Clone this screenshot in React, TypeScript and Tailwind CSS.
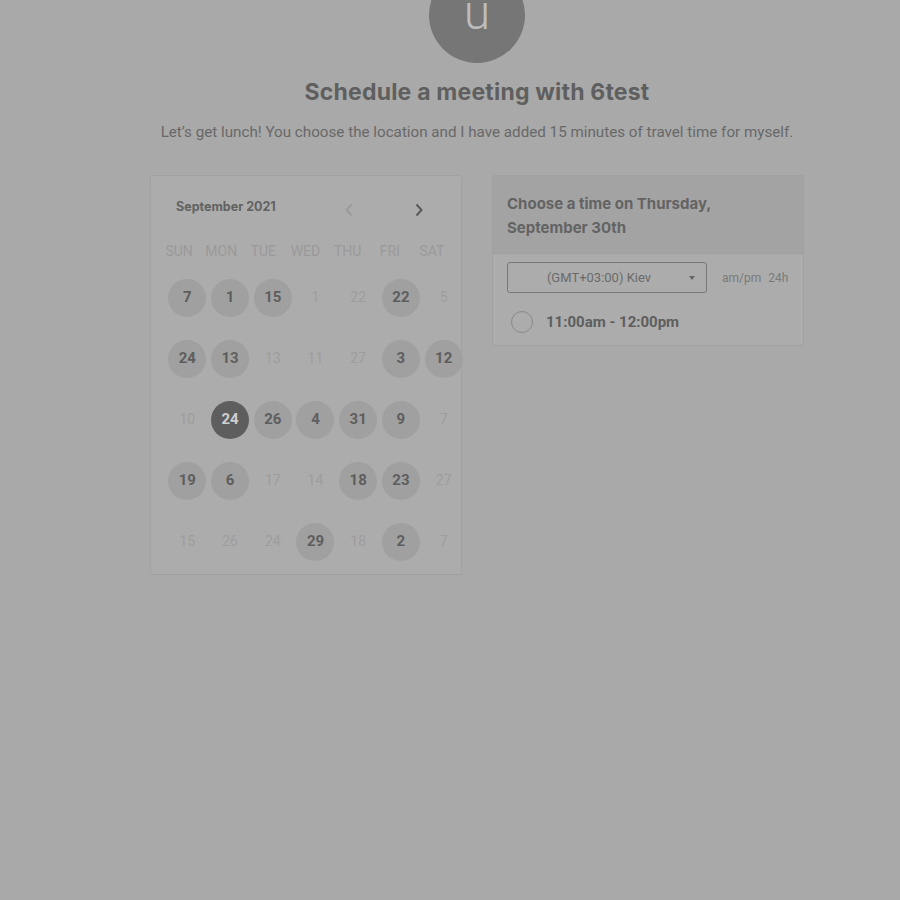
import React from 'react';

type Day = { n: number; on?: boolean; sel?: boolean };

const weeks: Day[][] = [
	[{ n: 7, on: true }, { n: 1, on: true }, { n: 15, on: true }, { n: 1 }, { n: 22 }, { n: 22, on: true }, { n: 5 }],
	[{ n: 24, on: true }, { n: 13, on: true }, { n: 13 }, { n: 11 }, { n: 27 }, { n: 3, on: true }, { n: 12, on: true }],
	[{ n: 10 }, { n: 24, on: true, sel: true }, { n: 26, on: true }, { n: 4, on: true }, { n: 31, on: true }, { n: 9, on: true }, { n: 7 }],
	[{ n: 19, on: true }, { n: 6, on: true }, { n: 17 }, { n: 14 }, { n: 18, on: true }, { n: 23, on: true }, { n: 27 }],
	[{ n: 15 }, { n: 26 }, { n: 24 }, { n: 29, on: true }, { n: 18 }, { n: 2, on: true }, { n: 7 }]
];

const weekdays = ['SUN', 'MON', 'TUE', 'WED', 'THU', 'FRI', 'SAT'];

const inter = { fontFamily: 'Inter, "Liberation Sans", sans-serif' };

function Chevron({ dir, className }: { dir: 'left' | 'right'; className?: string }) {
	return (
		<svg width="10" height="14" viewBox="0 0 10 14" className={className}>
			<path
				d={dir === 'left' ? 'M7.5 1.5 L2.5 7 L7.5 12.5' : 'M2.5 1.5 L7.5 7 L2.5 12.5'}
				fill="none"
				stroke="currentColor"
				strokeWidth="2"
			/>
		</svg>
	);
}

function DayCell({ day }: { day: Day }) {
	if (day.sel) {
		return (
			<div className="flex h-[61px] items-center justify-center">
				<div className="flex h-[38px] w-[38px] items-center justify-center rounded-full bg-[#5e5e5e] text-[15px] font-bold text-[#cfcfcf]">
					{day.n}
				</div>
			</div>
		);
	}
	if (day.on) {
		return (
			<div className="flex h-[61px] items-center justify-center">
				<div className="flex h-[38px] w-[38px] items-center justify-center rounded-full bg-[#a0a0a0] text-[15px] font-bold text-[#5e5e5e]">
					{day.n}
				</div>
			</div>
		);
	}
	return (
		<div className="flex h-[61px] items-center justify-center text-[14px] text-[#9d9d9d]">{day.n}</div>
	);
}

function Calendar() {
	return (
		<div className="h-[400px] w-[312px] rounded-[2px] border border-[#a1a1a1] bg-[#acacac] pt-[19px]">
			<div className="flex h-[24px] items-center pl-[25px]">
				<span className="w-[160px] text-[12.5px] font-bold text-[#626262]" style={inter}>
					September 2021
				</span>
				<Chevron dir="left" className="ml-[8px] mt-[6px] text-[#9a9a9a]" />
				<Chevron dir="right" className="ml-[60px] mt-[6px] text-[#5a5a5a]" />
			</div>
			<div className="ml-[7px] mt-[22px] grid w-[295px] grid-cols-7 text-center text-[14px] leading-[20px] text-[#9a9a9a]">
				{weekdays.map((w) => (
					<span key={w}>{w}</span>
				))}
			</div>
			<div className="ml-[15px] mt-[6px] grid w-[299px] grid-cols-7">
				{weeks.flat().map((d, i) => (
					<DayCell key={i} day={d} />
				))}
			</div>
		</div>
	);
}

function TimePanel() {
	return (
		<div className="h-[171px] w-[312px] rounded-[2px] border border-[#a1a1a1] bg-[#acacac]">
			<div
				className="h-[78px] border-b border-[#a0a0a0] bg-[#a3a3a3] px-[14px] pt-[16px] text-[15px] font-bold leading-[24px] text-[#636363]"
				style={inter}
			>
				Choose a time on Thursday,
				<br />
				September 30th
			</div>
			<div className="flex items-center pl-[14px] pt-[8px]">
				<div className="relative flex h-[31px] w-[200px] items-center justify-center rounded-[3px] border border-[#787878] text-[13px] text-[#6a6a6a]">
					<span className="-ml-[16px]">(GMT+03:00) Kiev</span>
					<span className="absolute right-[11px] top-[13px] h-0 w-0 border-x-[3.5px] border-t-[4px] border-x-transparent border-t-[#666]" />
				</div>
				<span className="ml-[15px] text-[12px] text-[#7a7a7a]">am/pm</span>
				<span className="ml-[7px] text-[12px] text-[#7a7a7a]">24h</span>
			</div>
			<div className="flex items-center pl-[18px] pt-[18px]">
				<span className="h-[22px] w-[22px] rounded-full border-[1.5px] border-[#8a8a8a]" />
				<span className="ml-[13px] text-[15px] font-bold text-[#5e5e5e]">11:00am - 12:00pm</span>
			</div>
		</div>
	);
}

export default function App() {
	return (
		<div
			className="h-[900px] w-[900px] overflow-hidden bg-[#a9a9a9] pl-[54px]"
			style={{ fontFamily: 'Roboto, "Liberation Sans", sans-serif' }}
		>
			<div className="flex flex-col items-center">
				<div className="-mt-[33px] flex h-[96px] w-[96px] items-center justify-center rounded-full bg-[#767676] text-[48px] font-light leading-none text-[#bdbdbd]">
					<span className="-mt-[4px]">u</span>
				</div>
				<h1
					className="mt-[14px] text-[23px] font-bold leading-[30px] tracking-[0.2px] text-[#5f5f5f]"
					style={inter}
				>
					Schedule a meeting with 6test
				</h1>
				<p className="mt-[15px] text-[15.2px] leading-[20px] text-[#686868]">
					Let’s get lunch! You choose the location and I have added 15 minutes of travel time for myself.
				</p>
				<div className="mt-[33px] flex items-start gap-[30px]">
					<Calendar />
					<TimePanel />
				</div>
			</div>
		</div>
	);
}
